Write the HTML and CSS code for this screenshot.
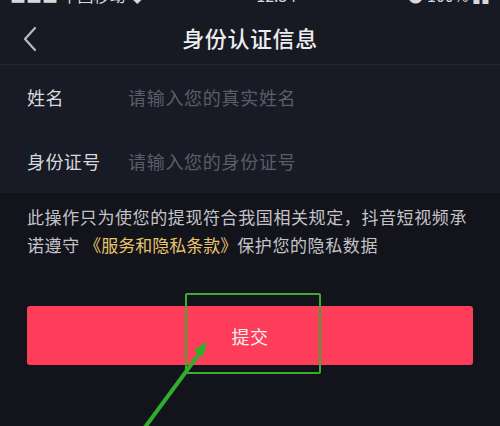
FILE: index.html
```html
<!DOCTYPE html>
<html lang="zh-CN">
<head>
  <meta charset="UTF-8">
  <meta name="viewport" content="width=device-width, initial-scale=1.0">
  <title>身份认证信息</title>
  <link rel="stylesheet" href="styles.css">
</head>
<body>
  <div class="page">
    <div class="status-bar">
      <span class="status-left">■■■ 中国移动 ◆</span>
      <span class="status-time">12:34</span>
      <span class="status-right">● 100% ▮▮</span>
    </div>

    <div class="header">
      <svg class="back" width="14" height="26" viewBox="0 0 14 26">
        <path d="M12 2 L2 13 L12 24" fill="none" stroke="#b9bac0" stroke-width="2.2" stroke-linecap="round" stroke-linejoin="round"/>
      </svg>
      <h1>身份认证信息</h1>
    </div>

    <div class="form">
      <div class="row">
        <span class="label">姓名</span>
        <span class="placeholder">请输入您的真实姓名</span>
      </div>
      <div class="row">
        <span class="label">身份证号</span>
        <span class="placeholder">请输入您的身份证号</span>
      </div>
    </div>

    <p class="notice">此操作只为使您的提现符合我国相关规定，抖音短视频承诺遵守 <span class="link">《服务和隐私条款》</span>保护您的隐私数据</p>

    <button class="submit">提交</button>

    <!-- annotation overlay -->
    <div class="mark-box"></div>
    <svg class="mark-arrow" width="500" height="426" viewBox="0 0 500 426">
      <line x1="143" y1="430" x2="199" y2="354" stroke="#2fae2c" stroke-width="4"/>
      <polygon points="207,342 194,350 203,357" fill="#2fae2c"/>
    </svg>
  </div>
</body>
</html>
```

FILE: styles.css
```css
body {
  margin: 0;
  background-color: #12131b;
  font-family: "Noto Sans CJK SC", "Noto Sans", sans-serif;
  overflow: hidden;
}

.page {
  position: relative;
  width: 500px;
  height: 426px;
  overflow: hidden;
}

.status-bar {
  height: 6px;
  overflow: hidden;
  display: flex;
  justify-content: space-between;
  align-items: flex-start;
  padding: 0 10px;
  background-color: #171923;
  color: #d8d8dc;
  font-size: 16px;
}

.status-left,
.status-time,
.status-right {
  display: block;
  line-height: 16px;
  margin-top: -13px;
}

.header {
  height: 59px;
  box-sizing: border-box;
  padding-top: 4px;
  display: flex;
  align-items: center;
  justify-content: center;
  position: relative;
  background-color: #171923;
  border-bottom: 1px solid #23252f;
}

.back {
  position: absolute;
  left: 23px;
  top: 20px;
}

.header h1 {
  margin: 0;
  font-size: 22px;
  font-weight: 500;
  color: #ececee;
  letter-spacing: 0.6px;
}

.form {
  background-color: #181a25;
  height: 128px;
}

.row {
  height: 64px;
  display: flex;
  align-items: center;
  padding-left: 27px;
  font-size: 18px;
  letter-spacing: 0.4px;
}

.label {
  width: 101px;
  color: #d9d9dd;
}

.placeholder {
  color: #5b5d68;
  letter-spacing: 0.7px;
}

.notice {
  margin: 0;
  padding: 10px 26px 0 27px;
  font-size: 17px;
  line-height: 28px;
  letter-spacing: 0.6px;
  color: #c4c4c8;
}

.link {
  color: #e9c46c;
  letter-spacing: 0;
}

.submit {
  display: block;
  margin: 47px 27px 0;
  width: 446px;
  height: 59px;
  border: none;
  border-radius: 3px;
  background-color: #fe3d5b;
  color: #f4f0f2;
  font-family: inherit;
  font-size: 18px;
  letter-spacing: 0.5px;
}

.mark-box {
  position: absolute;
  left: 185px;
  top: 293px;
  width: 132px;
  height: 77px;
  border: 2px solid #3eab2f;
  border-radius: 2px;
}

.mark-arrow {
  position: absolute;
  left: 0;
  top: 0;
}
```
